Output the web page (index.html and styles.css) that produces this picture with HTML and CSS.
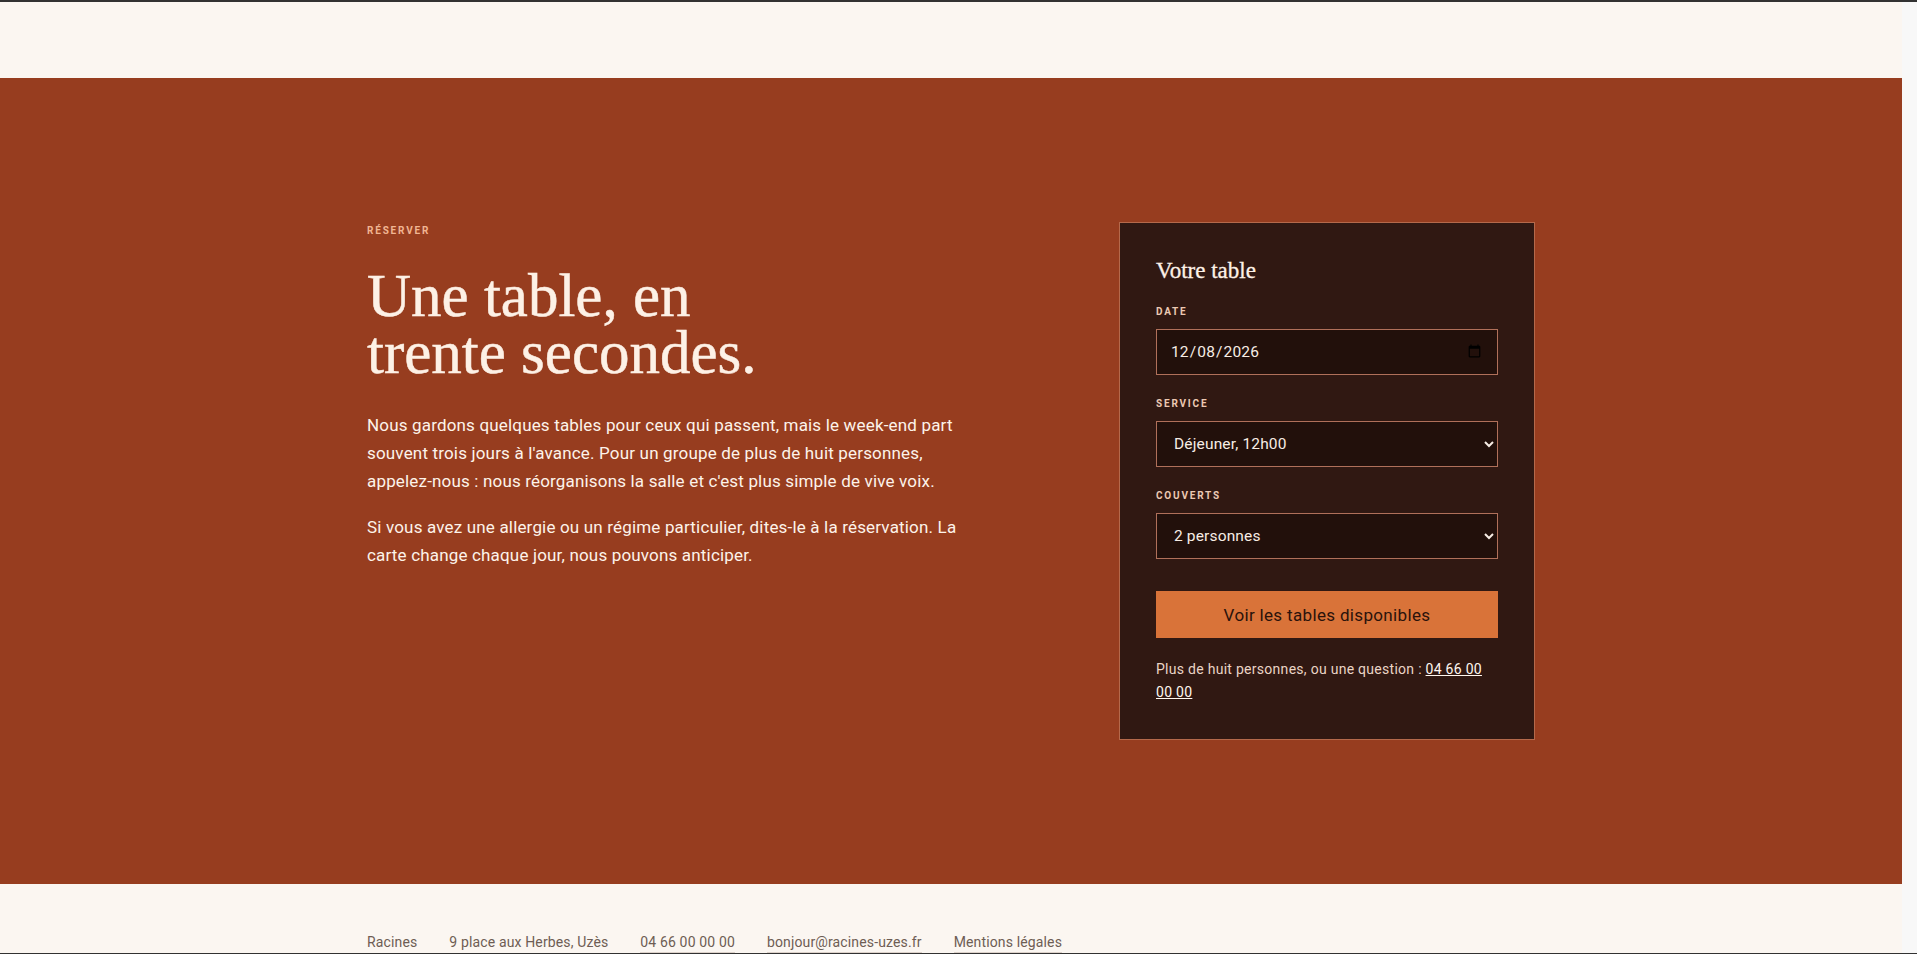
FILE: index.html
```html
<!DOCTYPE html>
<html lang="fr">
<head>
<meta charset="utf-8">
<title>Réserver — Racines, Uzès</title>
<link rel="stylesheet" href="styles.css">
</head>
<body>
<div class="page-top"></div>

<section class="booking" id="reserver">
  <div class="booking__inner">
    <div class="booking__intro">
      <p class="eyebrow">Réserver</p>
      <h2 class="booking__title">Une table, en trente secondes.</h2>
      <p class="booking__text">Nous gardons quelques tables pour ceux qui passent, mais le week-end part souvent trois jours à l'avance. Pour un groupe de plus de huit personnes, appelez-nous : nous réorganisons la salle et c'est plus simple de vive voix.</p>
      <p class="booking__text">Si vous avez une allergie ou un régime particulier, dites-le à la réservation. La carte change chaque jour, nous pouvons anticiper.</p>
    </div>

    <form class="table-form" action="#" onsubmit="return false;">
      <h3 class="table-form__title">Votre table</h3>

      <div class="field">
        <label class="field__label" for="resa-date">Date</label>
        <input class="field__control" type="date" id="resa-date" value="2026-12-08">
      </div>

      <div class="field">
        <label class="field__label" for="resa-service">Service</label>
        <select class="field__control field__control--select" id="resa-service">
          <option selected>Déjeuner, 12h00</option>
          <option>Déjeuner, 13h30</option>
          <option>Dîner, 19h30</option>
          <option>Dîner, 21h00</option>
        </select>
      </div>

      <div class="field">
        <label class="field__label" for="resa-couverts">Couverts</label>
        <select class="field__control field__control--select" id="resa-couverts">
          <option>1 personne</option>
          <option selected>2 personnes</option>
          <option>3 personnes</option>
          <option>4 personnes</option>
          <option>5 personnes</option>
          <option>6 personnes</option>
          <option>7 personnes</option>
          <option>8 personnes</option>
        </select>
      </div>

      <button class="table-form__submit" type="submit">Voir les tables disponibles</button>

      <p class="table-form__note">Plus de huit personnes, ou une question : <a href="tel:+33466000000">04 66 00 00 00</a></p>
    </form>
  </div>
</section>

<footer class="site-footer">
  <div class="site-footer__inner">
    <span>Racines</span>
    <span>9 place aux Herbes, Uzès</span>
    <a href="tel:+33466000000">04 66 00 00 00</a>
    <a href="mailto:bonjour@racines-uzes.fr">bonjour@racines-uzes.fr</a>
    <a href="#mentions">Mentions légales</a>
  </div>
</footer>
</body>
</html>
```

FILE: styles.css
```css
*, *::before, *::after {
  box-sizing: border-box;
}

/* window frame: thin dark edges and a light gutter on the right */
html {
  background: #f8f8f8;
  border-top: 2px solid #323232;
  border-bottom: 2px solid #323232;
}

body {
  margin: 0 15px 0 0;
  font-family: Roboto, "Liberation Sans", sans-serif;
  color: #2d1a12;
  background: #fbf6f1;
}

/* tail of the previous (cream) section */
.page-top {
  height: 76px;
}

/* ---------- Booking section ---------- */
.booking {
  background: #973d1f;
  color: #fdf3ea;
  padding: 144px 0;
}

.booking__inner {
  width: 1168px;
  margin: 0 auto;
  display: grid;
  grid-template-columns: 1fr 416px;
  align-items: start;
}

.eyebrow {
  margin: 0 0 27px;
  font-size: 10px;
  line-height: 18px;
  font-weight: 700;
  letter-spacing: 0.18em;
  text-transform: uppercase;
  color: #f1b592;
}

.booking__title {
  margin: 0 0 30px;
  max-width: 430px;
  font-family: "Liberation Serif", serif;
  font-weight: 400;
  font-size: 61px;
  line-height: 57px;
  color: #fdf1e6;
  -webkit-text-stroke: 0.5px #fdf1e6;
}

.booking__text {
  margin: 0;
  max-width: 600px;
  font-size: 17px;
  line-height: 28px;
  letter-spacing: 0.01em;
}

.booking__text + .booking__text {
  margin-top: 18px;
}

/* ---------- Reservation card ---------- */
.table-form {
  background: #301812;
  border: 1px solid #b4694b;
  padding: 35px 36px 35px;
}

.table-form__title {
  margin: 0 0 22px;
  font-family: "Liberation Serif", serif;
  font-weight: 400;
  font-size: 23px;
  line-height: 25px;
  color: #fdf1e6;
  -webkit-text-stroke: 0.3px #fdf1e6;
}

.field {
  margin-bottom: 22px;
}

.field:last-of-type {
  margin-bottom: 0;
}

.field__label {
  display: block;
  margin-bottom: 10px;
  font-size: 10px;
  line-height: 14px;
  font-weight: 700;
  letter-spacing: 0.18em;
  text-transform: uppercase;
  color: #ecc9b3;
}

.field__control {
  display: block;
  width: 100%;
  height: 46px;
  margin: 0;
  padding: 0 13px;
  background: #22100b;
  border: 1px solid #b0705a;
  border-radius: 0;
  color: #f7ede5;
  font-family: Roboto, "Liberation Sans", sans-serif;
  font-size: 15.5px;
  letter-spacing: 0.01em;
}

.table-form__submit {
  display: block;
  width: 100%;
  height: 47px;
  margin-top: 32px;
  border: 0;
  border-radius: 0;
  background: #d97339;
  color: #2a120b;
  font-family: Roboto, "Liberation Sans", sans-serif;
  font-size: 17px;
  letter-spacing: 0.02em;
  cursor: pointer;
}

.table-form__note {
  margin: 20px 0 0;
  font-size: 14px;
  line-height: 23px;
  letter-spacing: 0.02em;
  color: #ead4c5;
}

.table-form__note a {
  color: #fff6ee;
  text-decoration: underline;
}

/* ---------- Footer ---------- */
.site-footer {
  background: #fbf6f1;
}

.site-footer__inner {
  width: 1168px;
  margin: 0 auto;
  padding-top: 48px;
  display: flex;
  gap: 32px;
  font-size: 14px;
  line-height: 20px;
  letter-spacing: 0.01em;
  color: #6e5d54;
}

.site-footer__inner a {
  color: inherit;
  text-decoration: none;
  border-bottom: 1px solid #ddd2ca;
}
```
